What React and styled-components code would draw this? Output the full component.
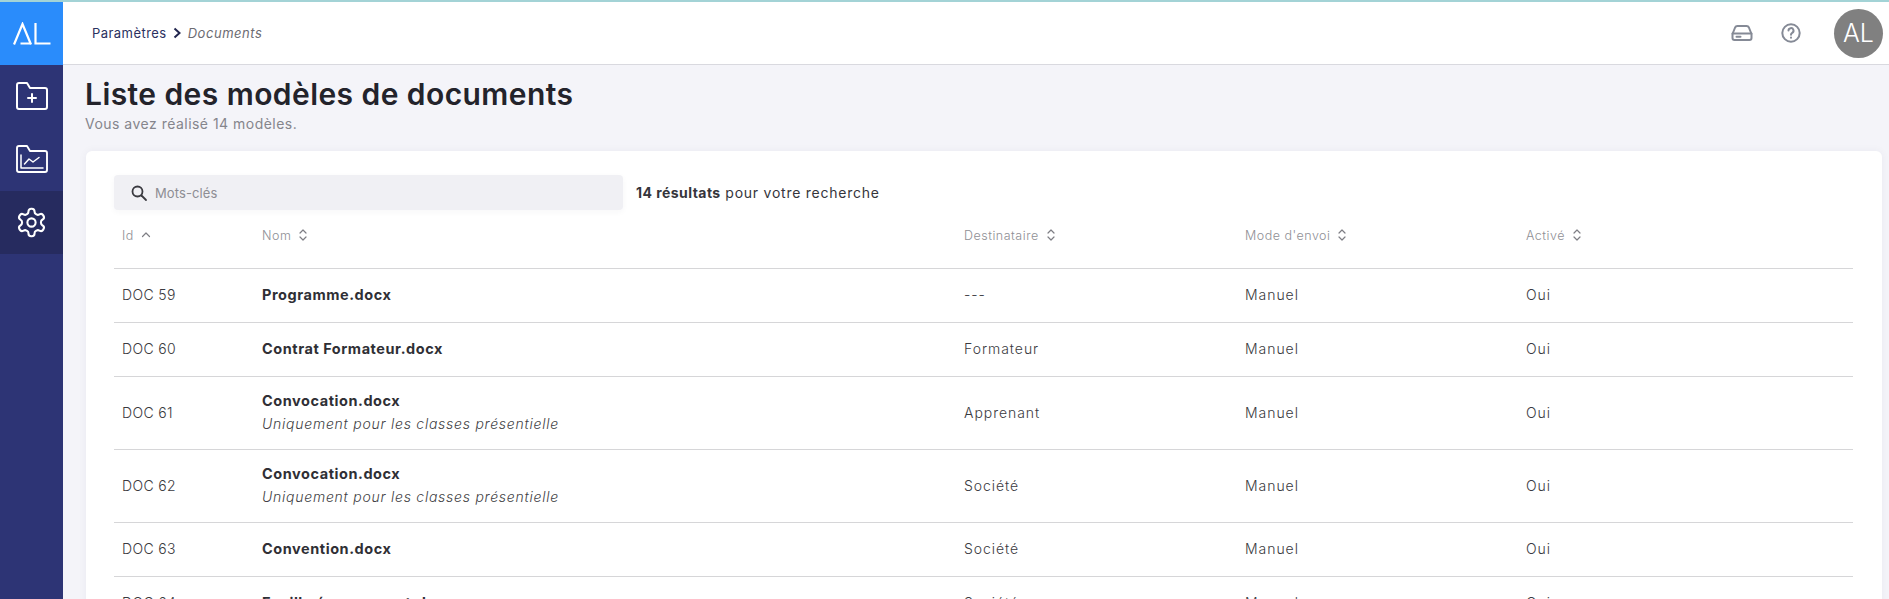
import React from "react";
import styled, { createGlobalStyle } from "styled-components";

const Global = createGlobalStyle`
  html, body { margin: 0; padding: 0; height: 100%; overflow: hidden; }
  body { font-family: Inter, "Noto Sans", sans-serif; background: #f4f4f9; }
  #root { height: 100%; }
`;
const Shell = styled.div`
  display: flex; flex-direction: column; height: 599px; overflow: hidden; background: #f4f4f9;
`;
const TopLine = styled.div`height: 2px; background: #a3d3d6; flex: none;`;
const Body = styled.div`display: flex; flex: 1; min-height: 0;`;
const Sidebar = styled.nav`
  width: 63px; flex: none; background: #2d3475; display: flex; flex-direction: column;
`;
const Brand = styled.div`
  height: 63px; background: #2a8cfb; display: flex; align-items: center; justify-content: center; color: #fff;
`;
const NavItem = styled.div`
  height: 63px; display: flex; align-items: center; justify-content: center;
  background: ${p => (p.$active ? "#262b5f" : "transparent")};
`;
const Main = styled.div`flex: 1; min-width: 0; display: flex; flex-direction: column;`;
const Header = styled.header`
  height: 62px; flex: none; background: #fff; border-bottom: 1px solid #d9d9df; box-sizing: content-box;
  display: flex; align-items: center; padding: 0 6px 0 29px;
`;
const Crumb = styled.span`font-size: 13px; color: #2b3160; letter-spacing: 0.45px;`;
const CrumbEm = styled.span`font-size: 13px; font-style: italic; color: #6c6c72; letter-spacing: 0.55px;`;
const Chevron = styled.svg`width: 10px; height: 12px; margin: 0 6px 0 5px;`;
const HeaderTools = styled.div`margin-left: auto; display: flex; align-items: center;`;
const ToolIcon = styled.svg`width: 22px; height: 22px; margin-right: ${p => p.$mr}px; color: #858a96;`;
const Avatar = styled.div`
  width: 49px; height: 49px; border-radius: 50%; background: #808080; color: #fff;
  display: flex; align-items: center; justify-content: center; font-size: 25px; font-weight: 300;
`;
const Content = styled.main`padding: 13px 7px 0 22px; flex: 1; min-height: 0;`;
const Title = styled.h1`
  margin: 0; font-size: 30px; line-height: 32px; font-weight: 600; color: #23232b; letter-spacing: 0.43px;
`;
const Subtitle = styled.p`
  margin: 5px 0 0; font-size: 14px; line-height: 17px; color: #85858c; letter-spacing: 0.48px;
`;
const Card = styled.section`
  margin: 19px 0 0 1px; background: #fff; border-radius: 6px; padding: 24px 29px 0 28px;
  box-shadow: 0 0 8px rgba(40, 40, 80, 0.05);
`;
const SearchRow = styled.div`display: flex; align-items: center; gap: 13px;`;
const SearchBox = styled.div`
  width: 509px; height: 35px; background: #f0f0f4; border-radius: 4px; display: flex; align-items: center;
  padding-left: 16px; box-sizing: border-box; gap: 7px; box-shadow: 0 2px 6px rgba(40, 40, 80, 0.04);
`;
const Placeholder = styled.span`font-size: 13px; color: #8d8d93; letter-spacing: 0.1px;`;
const Results = styled.div`font-size: 14px; color: #35353b; letter-spacing: 0.75px;`;
const Strong = styled.b`font-weight: 700; letter-spacing: 0.45px;`;
const Table = styled.div`display: flex; flex-direction: column;`;
const Row = styled.div`
  display: grid; grid-template-columns: 140px 702px 281px 281px 1fr; align-items: center;
  height: ${p => p.$h}px; border-bottom: 1px solid #d6d6d8; padding: 0 0 2px 8px;
  box-sizing: border-box; flex: none;
`;
const HeadCell = styled.div`
  font-size: 12.5px; font-weight: 300; color: #8f8f95; display: flex; align-items: center; gap: 7px;
  letter-spacing: 0.5px; padding-bottom: 6px;
`;
const Cell = styled.div`font-size: 14px; font-weight: 300; color: #3a3a40; letter-spacing: 0.95px;`;
const IdCell = styled(Cell)`letter-spacing: 0.35px;`;
const Name = styled.div`font-size: 14.5px; font-weight: 700; color: #2f2f35; line-height: 19px; letter-spacing: 0.55px;`;
const Note = styled.div`font-size: 14px; font-style: italic; font-weight: 300; color: #3f3f45; line-height: 19px; margin-top: 4px; letter-spacing: 0.75px;`;
const SortIcon = styled.svg`width: 10px; height: 14px; color: #7e7e84;`;

const Sort = ({ up }) => (
  <SortIcon viewBox="0 0 10 14" fill="none" stroke="currentColor" strokeWidth="1.2" strokeLinecap="round" strokeLinejoin="round">
    {up ? <path d="M1.5 8.5L5 5l3.5 3.5" /> : (
      <>
        <path d="M2 5l3-3 3 3" />
        <path d="M2 9l3 3 3-3" />
      </>
    )}
  </SortIcon>
);

const rows = [
  { id: "DOC 59", name: "Programme.docx", to: "---", h: 54 },
  { id: "DOC 60", name: "Contrat Formateur.docx", to: "Formateur", h: 54 },
  { id: "DOC 61", name: "Convocation.docx", note: "Uniquement pour les classes présentielle", to: "Apprenant", h: 73 },
  { id: "DOC 62", name: "Convocation.docx", note: "Uniquement pour les classes présentielle", to: "Société", h: 73 },
  { id: "DOC 63", name: "Convention.docx", to: "Société", h: 54 },
  { id: "DOC 64", name: "Feuille émargement.docx", to: "Société", h: 54 },
];

export default function App() {
  return (
    <Shell>
      <Global />
      <TopLine />
      <Body>
        <Sidebar>
          <Brand>
            <svg width="38" height="23" viewBox="0 0 38 23" fill="none" stroke="#fff" strokeWidth="2.2">
              <path d="M1 22.5L9.5 2 18 22.5M7.5 21.5H17.5" />
              <path d="M22.5 1V21.5H37.5" />
            </svg>
          </Brand>
          <NavItem>
            <svg width="34" height="30" viewBox="0 1 34 30" fill="none" stroke="#fff" strokeWidth="2" strokeLinejoin="round" strokeLinecap="round">
              <path d="M2 4a2 2 0 0 1 2-2h8l3 5h15a2 2 0 0 1 2 2v17a2 2 0 0 1-2 2H4a2 2 0 0 1-2-2z" />
              <path d="M17 13v8M13 17h8" />
            </svg>
          </NavItem>
          <NavItem>
            <svg width="34" height="30" viewBox="0 1 34 30" fill="none" stroke="#fff" strokeWidth="1.9" strokeLinejoin="round" strokeLinecap="round">
              <path d="M2 4a2 2 0 0 1 2-2h8l3 5h15a2 2 0 0 1 2 2v17a2 2 0 0 1-2 2H4a2 2 0 0 1-2-2z" />
              <path d="M6 11v13h22M9.5 20l4.5-5 4 3 6-4.5" strokeWidth="1.5" />
            </svg>
          </NavItem>
          <NavItem $active>
            <svg width="33" height="33" viewBox="0 0 24 24" fill="none" stroke="#fff" strokeWidth="1.5" strokeLinejoin="round">
              <path d="M12.22 2h-.44a2 2 0 0 0-2 2v.18a2 2 0 0 1-1 1.73l-.43.25a2 2 0 0 1-2 0l-.15-.08a2 2 0 0 0-2.73.73l-.22.38a2 2 0 0 0 .73 2.73l.15.1a2 2 0 0 1 1 1.72v.51a2 2 0 0 1-1 1.74l-.15.09a2 2 0 0 0-.73 2.73l.22.38a2 2 0 0 0 2.73.73l.15-.08a2 2 0 0 1 2 0l.43.25a2 2 0 0 1 1 1.73V20a2 2 0 0 0 2 2h.44a2 2 0 0 0 2-2v-.18a2 2 0 0 1 1-1.73l.43-.25a2 2 0 0 1 2 0l.15.08a2 2 0 0 0 2.73-.73l.22-.39a2 2 0 0 0-.73-2.73l-.15-.08a2 2 0 0 1-1-1.74v-.5a2 2 0 0 1 1-1.74l.15-.09a2 2 0 0 0 .73-2.73l-.22-.38a2 2 0 0 0-2.73-.73l-.15.08a2 2 0 0 1-2 0l-.43-.25a2 2 0 0 1-1-1.73V4a2 2 0 0 0-2-2z" />
              <circle cx="12" cy="12" r="3" />
            </svg>
          </NavItem>
        </Sidebar>
        <Main>
          <Header>
            <Crumb>Paramètres</Crumb>
            <Chevron viewBox="0 0 10 12" fill="none" stroke="#22264f" strokeWidth="2"><path d="M2.5 1.5L7.5 6l-5 4.5" /></Chevron>
            <CrumbEm>Documents</CrumbEm>
            <HeaderTools>
              <ToolIcon $mr={27} viewBox="0 0 22 22" fill="none" stroke="currentColor" strokeWidth="2" strokeLinejoin="round" strokeLinecap="round">
                <path d="M1.5 12l2.6-6.5A2.5 2.5 0 0 1 6.4 4h9.2a2.5 2.5 0 0 1 2.3 1.5L20.5 12v4a2 2 0 0 1-2 2h-15a2 2 0 0 1-2-2z" />
                <path d="M1.5 11.5h19M5.5 14.7h4" />
              </ToolIcon>
              <ToolIcon $mr={32} viewBox="0 0 22 22" fill="none" stroke="currentColor" strokeWidth="2" strokeLinecap="round">
                <circle cx="11" cy="11" r="8.7" />
                <path d="M8.5 8.6a2.5 2.5 0 1 1 3.7 2.2c-.8.5-1.2 1-1.2 1.9" />
                <path d="M11 15.6v.1" />
              </ToolIcon>
              <Avatar>AL</Avatar>
            </HeaderTools>
          </Header>
          <Content>
            <Title>Liste des modèles de documents</Title>
            <Subtitle>Vous avez réalisé 14 modèles.</Subtitle>
            <Card>
              <SearchRow>
                <SearchBox>
                  <svg width="18" height="18" viewBox="0 0 18 18" fill="none" stroke="#3a3a40" strokeWidth="1.8" strokeLinecap="round">
                    <circle cx="7.5" cy="7.5" r="5" />
                    <path d="M11.5 11.5l4.5 4.5" />
                  </svg>
                  <Placeholder>Mots-clés</Placeholder>
                </SearchBox>
                <Results><Strong>14 résultats</Strong> pour votre recherche</Results>
              </SearchRow>
              <Table>
                <Row $h={59}>
                  <HeadCell>Id <Sort up /></HeadCell>
                  <HeadCell>Nom <Sort /></HeadCell>
                  <HeadCell>Destinataire <Sort /></HeadCell>
                  <HeadCell>Mode d'envoi <Sort /></HeadCell>
                  <HeadCell>Activé <Sort /></HeadCell>
                </Row>
                {rows.map(r => (
                  <Row key={r.id} $h={r.h}>
                    <IdCell>{r.id}</IdCell>
                    <div>
                      <Name>{r.name}</Name>
                      {r.note && <Note>{r.note}</Note>}
                    </div>
                    <Cell>{r.to}</Cell>
                    <Cell>Manuel</Cell>
                    <Cell>Oui</Cell>
                  </Row>
                ))}
              </Table>
            </Card>
          </Content>
        </Main>
      </Body>
    </Shell>
  );
}
